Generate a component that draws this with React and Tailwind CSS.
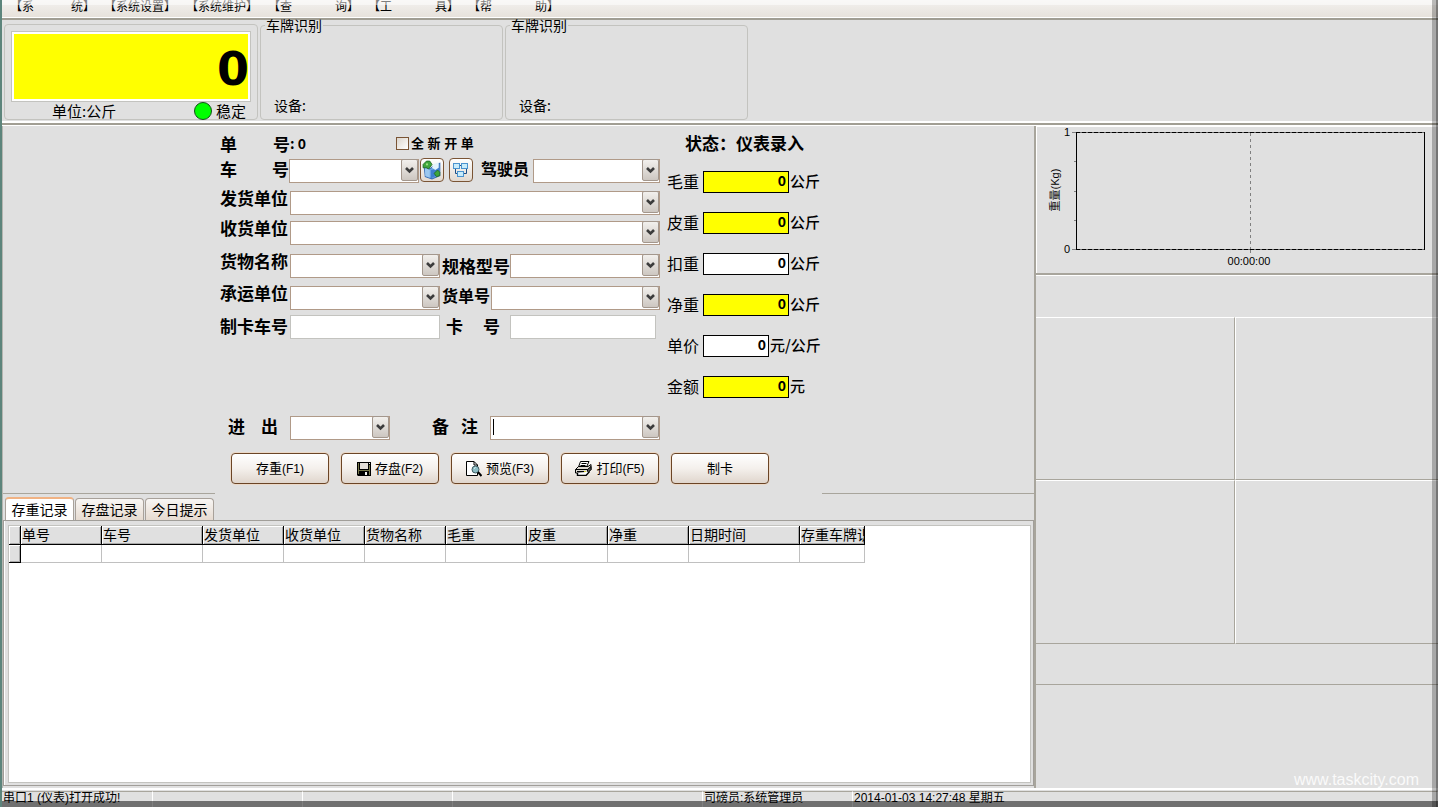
import React from "react";

function Chevron() {
  return (
    <svg width="9" height="7" viewBox="0 0 9 7" aria-hidden="true">
      <path d="M1 1l3.500 3.500L8 1" fill="none" stroke="#3c3c3c" strokeWidth="2.600" />
    </svg>
  );
}

const ARROW =
  "absolute inset-y-px right-px flex w-[17px] items-center justify-center rounded-xs border border-[#a3978d] bg-gradient-to-b from-[#f2f0ed] to-[#cdc7c1]";

function Combo({ id, label, width }) {
  return (
    <div className={`relative h-6 shrink-0 ${width}`}>
      <select
        id={id}
        aria-label={label}
        className="h-full w-full appearance-none border border-[#b09a88] bg-white px-1 text-sm outline-none"
      >
        <option value=""></option>
      </select>
      <span className={`pointer-events-none ${ARROW}`}>
        <Chevron />
      </span>
    </div>
  );
}

function Label({ htmlFor, className = "", children }) {
  return (
    <label
      htmlFor={htmlFor}
      className={`flex h-6 shrink-0 items-center whitespace-nowrap text-[17px] font-bold leading-none ${className}`}
    >
      {children}
    </label>
  );
}

function MapIcon() {
  return (
    <svg width="20" height="20" viewBox="0 0 18 18" aria-hidden="true">
      <path d="M2 6l5 2 4-3 5-2v11l-7 3-6-2z" fill="#6fa8e2" stroke="#3b6fb5" />
      <path d="M8 9v7.500L15.500 13V4L12 8z" fill="#3f7fd0" />
      <path d="M2.500 7L7 9v7l-4-1.500z" fill="#9cc8f0" />
      <path d="M10 4l5-2v5l-3 2-3-2z" fill="#e4f3fc" />
      <path d="M1 4l3-3h3l2 3-3 4-2-1H1z" fill="#3fa63c" stroke="#226b25" strokeWidth=".8" />
      <path d="M11 12l3-3 2 2v3l-3 1z" fill="#3fa63c" stroke="#226b25" strokeWidth=".8" />
      <circle cx="4.500" cy="4" r="1" fill="#9be07f" />
    </svg>
  );
}

function NetworkIcon() {
  return (
    <svg width="16" height="16" viewBox="0 0 16 16" className="shrink-0" aria-hidden="true">
      <path d="M2.500 6v5.500h3M13.500 6v5.500h-3M6 3.500h4" fill="none" stroke="#1e4f86" />
      <g fill="#c9ecfb" stroke="#4b93cf">
        <rect x=".5" y="1.500" width="6" height="5" />
        <rect x="8.500" y="1.500" width="6" height="5" />
        <rect x="4.500" y="9.500" width="6" height="5" />
      </g>
    </svg>
  );
}

function SaveIcon() {
  return (
    <svg width="14" height="14" viewBox="0 0 14 14" aria-hidden="true">
      <path d="M0 0h14v14H1l-1-1z" fill="#000" />
      <path d="M1 1h1v11H1zM12 3h1v10h-1zM2 8h10v1H2z" fill="#77774a" />
      <path d="M3 1h8v6H3z" fill="#e4dfd9" />
      <path d="M12 1h1v1h-1zM8 10h2v3H8z" fill="#f4f4f4" />
    </svg>
  );
}

function PreviewIcon() {
  return (
    <svg width="16" height="16" viewBox="0 0 16 16" aria-hidden="true">
      <path d="M.5.5H8L11.500 4v10.500H.5z" fill="#fff" stroke="#000" />
      <path d="M8 .5V4h3.500" fill="none" stroke="#000" />
      <circle cx="9.500" cy="8.500" r="3.500" fill="#8cbcc4" stroke="#3c5a60" />
      <path d="M12 11l3.500 4" stroke="#000" strokeWidth="2" />
      <path d="M8 7.500l1.500-1" stroke="#e8ffff" />
    </svg>
  );
}

function PrintIcon() {
  return (
    <svg width="17" height="15" viewBox="0 0 17 15" aria-hidden="true">
      <path d="M5.500.5H14L11.500 6h-8z" fill="#fff" stroke="#000" />
      <path d="M6.500 2.500h5M5.500 4.500h5" stroke="#000" />
      <path d="M.5 8.500l3-3h9.500l3-2v5l-3.500 3.500H.5z" fill="#ddd8d0" stroke="#000" />
      <path d="M12.500 8.500l3.500-3v3L12.500 12z" fill="#555" stroke="#000" />
      <path d="M.5 8.500h12M12.500 8.500V12" fill="none" stroke="#000" />
      <path d="M2 10.500h9" stroke="#000" />
      <path d="M9 10.500h2" stroke="#d6d637" />
      <path d="M2.500 12v2.500H11l3.500-4" fill="#fff" stroke="#000" strokeWidth="1.400" />
    </svg>
  );
}

const MENUS = [
  { left: "【系", right: "统】", width: "w-[85px]" },
  { left: "【系统设置】", width: "w-[73px]" },
  { left: "【系统维护】", width: "w-[73px]" },
  { left: "【查", right: "询】", width: "w-[91px]" },
  { left: "【工", right: "具】", width: "w-[91px]" },
  { left: "【帮", right: "助】", width: "w-[91px]" },
];

function MenuBar() {
  return (
    <nav className="flex h-[20px] gap-[9px] border-b-2 border-[#a19e93] bg-gradient-to-b from-[#f3f1ef] to-[#e6e1da] pl-2 font-['Liberation_Sans','Noto_Sans_CJK_SC',sans-serif] shadow-[inset_0_-1px_0_#fff]">
      {MENUS.map((m) => (
        <button
          key={m.left}
          type="button"
          className={`flex h-3.5 shrink-0 justify-between whitespace-nowrap text-xs leading-[14px] ${m.width}`}
        >
          <span>{m.left}</span>
          {m.right && <span>{m.right}</span>}
        </button>
      ))}
    </nav>
  );
}

function PlateBox() {
  return (
    <fieldset className="flex h-[102px] w-[243px] flex-col justify-end rounded border border-[#c3c3bf] px-1 pb-1.5">
      <legend className="h-[15px] px-px text-sm leading-[15px]">车牌识别</legend>
      <span className="pl-[9px] text-sm leading-[15px]">设备:</span>
    </fieldset>
  );
}

function Header() {
  return (
    <header className="flex h-[101px] items-end gap-0.5 pb-px pl-0.5">
      <section className="flex h-[96px] w-[254px] flex-col rounded border border-[#c3c3bf] px-[6px] pt-[6px]">
        <output className="flex h-[71px] items-center justify-end border border-[#c3c3bf] bg-[#ffff00] pr-px pt-1 font-['DejaVu_Sans',sans-serif] text-[46px] font-bold leading-none shadow-[inset_0_0_0_2px_#fff]">
          0
        </output>
        <div className="flex h-[17px] items-center justify-between pl-[41px] pr-[5px] text-[15px] leading-none">
          <span>单位:公斤</span>
          <span className="flex items-center gap-1">
            <span className="size-[18px] rounded-full border border-[#14501a] bg-[#00ff00]" />
            稳定
          </span>
        </div>
      </section>
      <PlateBox />
      <PlateBox />
    </header>
  );
}

const WEIGHTS = [
  { id: "gross", label: "毛重", unit: "公斤", bg: "bg-[#ffff00]", width: "w-[86px]" },
  { id: "tare", label: "皮重", unit: "公斤", bg: "bg-[#ffff00]", width: "w-[86px]" },
  { id: "deduct", label: "扣重", unit: "公斤", bg: "bg-white", width: "w-[86px]" },
  { id: "net", label: "净重", unit: "公斤", bg: "bg-[#ffff00]", width: "w-[86px]" },
  { id: "price", label: "单价", unit: "元/公斤", bg: "bg-white", width: "w-[66px]" },
  { id: "amount", label: "金额", unit: "元", bg: "bg-[#ffff00]", width: "w-[86px]" },
];

function WeightColumn() {
  return (
    <div className="w-[155px] shrink-0">
      <p className="flex h-[35px] items-center whitespace-nowrap pb-0.5 pl-[18px] text-[17px] font-bold leading-none">
        状态：仪表录入
      </p>
      {WEIGHTS.map((w) => (
        <div key={w.id} className="flex h-[41px] items-center">
          <label htmlFor={w.id} className="w-9 shrink-0 pb-0.5 text-base leading-none">
            {w.label}
          </label>
          <input
            id={w.id}
            defaultValue="0"
            className={`h-[22px] shrink-0 border border-black pb-[3px] pr-0.5 text-right text-sm font-bold leading-none outline-none ${w.bg} ${w.width}`}
          />
          <span className="whitespace-nowrap pb-0.5 pl-px text-[15px] font-medium leading-none">{w.unit}</span>
        </div>
      ))}
    </div>
  );
}

const ICON_BUTTON =
  "flex size-6 shrink-0 items-center justify-center rounded border border-[#7a5434] bg-gradient-to-b from-white to-[#e2d9d0]";

const ACTIONS = [
  { name: "存重", key: "(F1)" },
  { name: "存盘", key: "(F2)", Icon: SaveIcon },
  { name: "预览", key: "(F3)", Icon: PreviewIcon },
  { name: "打印", key: "(F5)", Icon: PrintIcon },
  { name: "制卡" },
];

function EntryForm() {
  return (
    <form className="relative -mb-px h-[368px] w-[607px] bg-[#e0e0e0] pl-[5px]" onSubmit={(e) => e.preventDefault()}>
      <div className="flex gap-[7px]">
        <div className="w-[440px] shrink-0">
          <div className="flex h-[32px] items-center pt-0.5">
            <span className="flex w-[70px] justify-between text-[17px] font-bold leading-none">
              <span>单</span>
              <span>号</span>
            </span>
            <span className="w-[106px] text-sm font-bold leading-none">: 0</span>
            <input
              id="fresh"
              type="checkbox"
              className="size-[13px] appearance-none border border-[#7a5434] bg-gradient-to-br from-[#dcd5cc] to-white checked:bg-[#7a5434]"
            />
            <label htmlFor="fresh" className="whitespace-nowrap pl-0.5 font-['Liberation_Sans','Noto_Sans_CJK_SC',sans-serif] text-[13px] font-bold leading-none">
              全 新 开 单
            </label>
          </div>

          <div className="flex">
            <Label htmlFor="plate" className="w-[69px] justify-between pb-1">
              <span>车</span>
              <span>号</span>
            </Label>
            <Combo id="plate" width="w-[130px]" />
            <button type="button" aria-label="地图" className={`ml-px ${ICON_BUTTON}`}>
              <MapIcon />
            </button>
            <button type="button" aria-label="设备" className={`ml-[5px] ${ICON_BUTTON}`}>
              <NetworkIcon />
            </button>
            <Label htmlFor="driver" className="ml-2 w-[52px] pb-1">
              <span className="text-base leading-none">驾驶员</span>
            </Label>
            <Combo id="driver" width="w-[127px]" />
          </div>

          <div className="mt-2 flex">
            <Label htmlFor="sender" className="w-[70px] pb-2.5">发货单位</Label>
            <Combo id="sender" width="w-[370px]" />
          </div>

          <div className="mt-1.5 flex">
            <Label htmlFor="receiver" className="w-[70px] pb-2.5">收货单位</Label>
            <Combo id="receiver" width="w-[370px]" />
          </div>

          <div className="mt-[9px] flex">
            <Label htmlFor="goods" className="w-[70px] pb-2.5">货物名称</Label>
            <Combo id="goods" width="w-[150px]" />
            <Label htmlFor="model" className="w-[70px] pl-0.5">规格型号</Label>
            <Combo id="model" width="w-[150px]" />
          </div>

          <div className="mt-2 flex">
            <Label htmlFor="carrier" className="w-[70px] pb-2.5">承运单位</Label>
            <Combo id="carrier" width="w-[150px]" />
            <Label htmlFor="waybill" className="w-[51px] pb-1 pl-0.5">
              <span className="text-base leading-none">货单号</span>
            </Label>
            <Combo id="waybill" width="w-[169px]" />
          </div>

          <div className="mt-1.5 flex">
            <Label htmlFor="card-plate" className="w-[70px] pb-1">制卡车号</Label>
            <input id="card-plate" className="h-6 w-[150px] border border-[#c3c3bf] bg-white px-1 text-sm outline-none" />
            <Label htmlFor="card-no" className="w-[70px] justify-between pb-1 pl-1.5 pr-2.5">
              <span>卡</span>
              <span>号</span>
            </Label>
            <input id="card-no" className="h-6 w-[146px] border border-[#c3c3bf] bg-white px-1 text-sm outline-none" />
          </div>

          <div className="mt-19 flex">
            <Label htmlFor="direction" className="w-[70px] justify-between pb-1 pl-2 pr-3">
              <span>进</span>
              <span>出</span>
            </Label>
            <Combo id="direction" width="w-[100px]" />
            <Label htmlFor="remark" className="ml-[42px] w-[58px] justify-between pb-1 pr-3">
              <span>备</span>
              <span>注</span>
            </Label>
            <div className="relative h-6 w-[170px]">
              <input id="remark" className="h-full w-full border border-[#b09a88] bg-white px-1 text-sm outline-none" />
              <span className="pointer-events-none absolute left-[3px] top-1 h-4 w-px bg-black" />
              <button type="button" aria-label="备注选项" className={ARROW}>
                <Chevron />
              </button>
            </div>
          </div>
        </div>
        <WeightColumn />
      </div>

      <div className="mt-[14px] flex gap-3 pl-[11px]">
        {ACTIONS.map(({ name, key, Icon }) => (
          <button
            key={name}
            type="button"
            className="flex h-[31px] w-[98px] items-center justify-center gap-1 rounded border border-[#6b4526] bg-gradient-to-b from-white via-[#f4f0ec] to-[#e0d6cd] text-[13px] leading-none shadow-[0_0_0_1px_#ecd9c8]"
          >
            {Icon && <Icon />}
            <span className="pb-0.5">
              {name}
              {key && <span className="font-['Liberation_Sans',sans-serif] text-xs leading-none">{key}</span>}
            </span>
          </button>
        ))}
      </div>
    </form>
  );
}

const TABS = ["存重记录", "存盘记录", "今日提示"];

const COLUMNS = [
  { name: "单号", width: "w-[81px]" },
  { name: "车号", width: "w-[101px]" },
  { name: "发货单位", width: "w-[81px]" },
  { name: "收货单位", width: "w-[81px]" },
  { name: "货物名称", width: "w-[81px]" },
  { name: "毛重", width: "w-[81px]" },
  { name: "皮重", width: "w-[81px]" },
  { name: "净重", width: "w-[81px]" },
  { name: "日期时间", width: "w-[111px]" },
  { name: "存重车牌识别", width: "w-[65px]" },
];

const HEAD_CELL =
  "h-[19px] overflow-hidden whitespace-nowrap border-b border-r border-black bg-[#e0e0e0] p-0 pl-px text-left text-sm font-normal leading-4 shadow-[inset_1px_1px_0_#fff,inset_-1px_-1px_0_#a8a8a8]";

function Records() {
  return (
    <section className="flex flex-1 flex-col pt-[3px] font-['Liberation_Sans','Noto_Sans_CJK_SC',sans-serif]">
      <div role="tablist" className="flex h-[23px] items-end gap-px pl-0.5">
        {TABS.map((t, i) => (
          <button
            key={t}
            type="button"
            role="tab"
            aria-selected={i === 0}
            className={
              i === 0
                ? "h-[23px] w-[69px] rounded-t border border-b-0 border-t-2 border-[#a8a19a] border-t-[#f0b283] bg-white text-sm leading-4"
                : "h-[22px] w-[69px] rounded-t border border-b-0 border-[#a8a19a] bg-gradient-to-b from-[#f8f6f4] to-[#e6dbd1] text-sm leading-4"
            }
          >
            {t}
          </button>
        ))}
      </div>
      <div className="flex flex-1 flex-col border border-[#a19e99] pb-0.5 pl-1 pr-0.5 pt-1 shadow-[inset_1px_0_0_#fff]">
        <div className="flex-1 border border-[#c3c3bf] bg-white">
          <table className="w-[856px] table-fixed border-separate border-spacing-0">
            <thead>
              <tr>
                <th aria-label="当前行" className={`w-3 ${HEAD_CELL}`}></th>
                {COLUMNS.map((c) => (
                  <th key={c.name} className={`${c.width} ${HEAD_CELL}`}>
                    {c.name}
                  </th>
                ))}
              </tr>
            </thead>
            <tbody>
              <tr>
                <td className="h-[18px] border-b border-r border-black bg-[#e0e0e0] p-0 shadow-[inset_1px_1px_0_#fff,inset_-1px_-1px_0_#a8a8a8]"></td>
                {COLUMNS.map((c) => (
                  <td key={c.name} className="h-[18px] border-b border-r border-[#c0c0c0] p-0"></td>
                ))}
              </tr>
            </tbody>
          </table>
        </div>
      </div>
    </section>
  );
}

function WeightChart() {
  return (
    <svg width="396" height="146" viewBox="0 0 396 146" role="img" aria-label="重量(Kg)" shapeRendering="crispEdges">
      <path d="M36 5.500h5M36 122.500h5M38 34.500h3M38 64.500h3M38 93.500h3M214.500 122v4" stroke="#808080" />
      <path d="M40.500 5v118M388.500 5v118" stroke="#000" />
      <path d="M40 5.500h349M40 122.500h349" stroke="#6a6a6a" />
      <path d="M40 5.500h349M40 122.500h349" stroke="#000" strokeDasharray="4 2" />
      <path d="M214.500 6v116" stroke="#808080" strokeDasharray="3 3" />
      <g fill="#000" className="font-['Liberation_Sans','Noto_Sans_CJK_SC',sans-serif] text-[11px]">
        <text x="34" y="9" textAnchor="end">1</text>
        <text x="34" y="126" textAnchor="end">0</text>
        <text x="213" y="138" textAnchor="middle">00:00:00</text>
        <text x="23" y="63" textAnchor="middle" transform="rotate(-90 23 63)">重量(Kg)</text>
      </g>
    </svg>
  );
}

function SidePanel() {
  return (
    <aside className="flex w-[404px] shrink-0 flex-col border-l-2 border-[#a8a59c]">
      <div className="h-[149px] border-b-2 border-[#a8a59c] pt-px shadow-[inset_1px_1px_0_#fff]">
        <WeightChart />
      </div>
      <div className="h-[42px] border-t border-white" />
      <div className="grid grid-cols-[199px_1fr]">
        <div className="h-[163px] border-b border-r border-t border-[#a8a59c] border-t-white" />
        <div className="h-[163px] border-b border-l border-t border-[#a8a59c] border-l-white border-t-white" />
        <div className="h-[164px] border-b border-r border-t border-[#a8a59c] border-t-white" />
        <div className="h-[164px] border-b border-l border-t border-[#a8a59c] border-l-white border-t-white" />
      </div>
      <div className="h-[41px] border-b border-[#a8a59c]" />
      <p className="mt-auto pr-[19px] text-right font-['Liberation_Sans',sans-serif] text-base leading-4 text-[#fafafa]">
        www.taskcity.com
      </p>
    </aside>
  );
}

const STATUS = [
  { text: "串口1 (仪表)打开成功!", width: "w-[151px]" },
  { text: "", width: "w-[150px]" },
  { text: "", width: "w-[150px]" },
  { text: "", width: "w-[250px]" },
  { text: "司磅员:系统管理员", width: "w-[150px]" },
  { text: "2014-01-03 14:27:48 星期五", width: "flex-1" },
];

function StatusBar() {
  return (
    <footer className="flex h-[19px] border-t-2 border-white pt-px font-['Liberation_Sans','Noto_Sans_CJK_SC',sans-serif]">
      {STATUS.map((s, i) => (
        <div
          key={i}
          className={`h-4 whitespace-nowrap border-r border-t border-[#a8a59c] border-r-white pl-px text-xs leading-[13px] ${s.width}`}
        >
          {s.text}
        </div>
      ))}
    </footer>
  );
}

export default function App() {
  return (
    <div className="relative flex min-h-screen flex-col overflow-hidden border-l-2 border-[#5d857c] bg-[#e0e0e0] font-['Noto_Sans_CJK_SC',sans-serif] text-black">
      <MenuBar />
      <Header />
      <div className="h-[5px] border-b border-t-2 border-white bg-[#a19e93]" />
      <main className="flex flex-1">
        <div className="flex flex-1 flex-col border-l border-[#b5b5b0] pb-0.5">
          <div className="flex justify-center border-b border-[#a8a59c]">
            <EntryForm />
          </div>
          <Records />
        </div>
        <SidePanel />
      </main>
      <StatusBar />
      <div className="pointer-events-none absolute inset-x-0 top-0 h-[5px] bg-white/50" />
      <div className="pointer-events-none absolute inset-y-0 right-0 w-1.5 border-r-2 border-black/30 bg-black/25" />
      <div className="pointer-events-none absolute inset-x-0 bottom-0 h-1.5 bg-black/50" />
    </div>
  );
}
